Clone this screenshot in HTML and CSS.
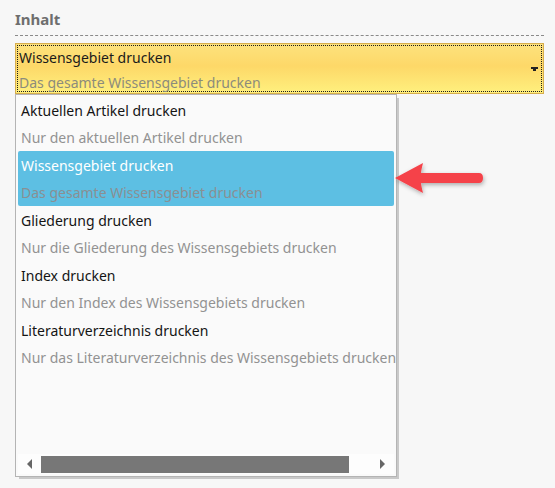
FILE: index.html
```html
<!DOCTYPE html>
<html lang="de">
<head>
    <meta charset="UTF-8" />
    <title>Inhalt</title>
    <link rel="stylesheet" href="styles.css">
</head>
<body>
    <div class="panel">
        <h2 class="section-title">Inhalt</h2>

        <div class="select">
            <div class="select-focus">
                <div class="opt-title">Wissensgebiet drucken</div>
                <div class="opt-desc">Das gesamte Wissensgebiet drucken</div>
            </div>
            <span class="caret"></span>
        </div>

        <div class="dropdown">
            <ul class="options">
                <li class="option">
                    <div class="opt-title">Aktuellen Artikel drucken</div>
                    <div class="opt-desc">Nur den aktuellen Artikel drucken</div>
                </li>
                <li class="option selected">
                    <div class="opt-title">Wissensgebiet drucken</div>
                    <div class="opt-desc">Das gesamte Wissensgebiet drucken</div>
                </li>
                <li class="option">
                    <div class="opt-title">Gliederung drucken</div>
                    <div class="opt-desc">Nur die Gliederung des Wissensgebiets drucken</div>
                </li>
                <li class="option">
                    <div class="opt-title">Index drucken</div>
                    <div class="opt-desc">Nur den Index des Wissensgebiets drucken</div>
                </li>
                <li class="option">
                    <div class="opt-title">Literaturverzeichnis drucken</div>
                    <div class="opt-desc">Nur das Literaturverzeichnis des Wissensgebiets drucken</div>
                </li>
            </ul>
            <div class="hscroll">
                <span class="scroll-btn left"></span>
                <div class="scroll-track"><div class="scroll-thumb"></div></div>
                <span class="scroll-btn right"></span>
            </div>
        </div>

        <svg class="pointer" width="110" height="50" viewBox="0 0 110 50">
            <defs>
                <filter id="shadow" x="-20%" y="-40%" width="140%" height="180%">
                    <feDropShadow dx="1" dy="2" stdDeviation="2" flood-color="#000" flood-opacity="0.3"/>
                </filter>
            </defs>
            <g filter="url(#shadow)" fill="#f5434a">
                <path d="M4 24 L32 9 Q30 17 30 19 L88 19 Q92 19 92 24 Q92 29 88 29 L30 29 Q30 31 32 39 Z"/>
            </g>
        </svg>
    </div>
</body>
</html>
```

FILE: styles.css
```css
* { margin: 0; padding: 0; box-sizing: border-box; }
body {
    background: #f7f7f7;
    font-family: 'Noto Sans', 'Open Sans', sans-serif;
    width: 555px;
    height: 488px;
    overflow: hidden;
}
.panel {
    position: relative;
    padding: 9px 11px 0 15px;
}
.section-title {
    font-size: 15px;
    font-weight: 700;
    color: #6e6e6e;
    line-height: 20px;
    padding-bottom: 6px;
    border-bottom: 1px dashed #8a8a8a;
    margin-bottom: 7px;
}
.select {
    position: relative;
    height: 51px;
    width: 529px;
    border: 1px solid #d6ad4e;
    background: linear-gradient(180deg, #fde27d 0%, #fdd868 45%, #fff07e 100%);
    padding: 1px;
}
.select-focus {
    height: 100%;
    border: 1px dotted #1c1c1c;
    padding-left: 1px;
}
.select .opt-title { color: #1a1a1a; line-height: 24px; }
.select .opt-desc { color: #8c8c7c; }
.caret {
    position: absolute;
    right: 5px;
    top: 23px;
    width: 7px;
    height: 4px;
    border-top: 2px solid #222;
}
.caret::after {
    content: '';
    position: absolute;
    left: 2px;
    top: 0;
    width: 3px;
    height: 2px;
    background: #222;
}
.opt-title, .opt-desc {
    font-size: 14px;
    line-height: 25px;
    white-space: nowrap;
}
.dropdown {
    width: 382px;
    height: 383px;
    background: #fafafa;
    border: 1px solid #b4b4b4;
    box-shadow: 3px 3px 0 -1px #c9c9c9;
    padding: 1px 2px;
    display: flex;
    flex-direction: column;
    overflow: hidden;
}
.options {
    list-style: none;
    flex: 1;
}
.option {
    height: 55px;
    padding: 1px 0 0 3px;
}
.option .opt-title { color: #141414; line-height: 27px; }
.option .opt-desc { color: #929292; line-height: 27px; }
.option.selected {
    background: #5dbfe3;
    border-radius: 2px;
}
.option.selected .opt-title { color: #fff; }
.option.selected .opt-desc { color: #8a8f93; }
.hscroll {
    height: 20px;
    display: flex;
    align-items: center;
    background: #fdfdfd;
    margin-bottom: 1px;
}
.scroll-btn {
    width: 23px;
    height: 100%;
    display: flex;
    align-items: center;
    justify-content: center;
}
.scroll-btn.left::before {
    content: '';
    border-right: 5px solid #666;
    border-top: 5px solid transparent;
    border-bottom: 5px solid transparent;
}
.scroll-btn.right::before {
    content: '';
    border-left: 5px solid #666;
    border-top: 5px solid transparent;
    border-bottom: 5px solid transparent;
}
.scroll-track {
    flex: 1;
    height: 100%;
    display: flex;
    align-items: center;
}
.scroll-thumb {
    width: 308px;
    height: 17px;
    background: #777;
}
.pointer {
    position: absolute;
    left: 391px;
    top: 154px;
}
```
